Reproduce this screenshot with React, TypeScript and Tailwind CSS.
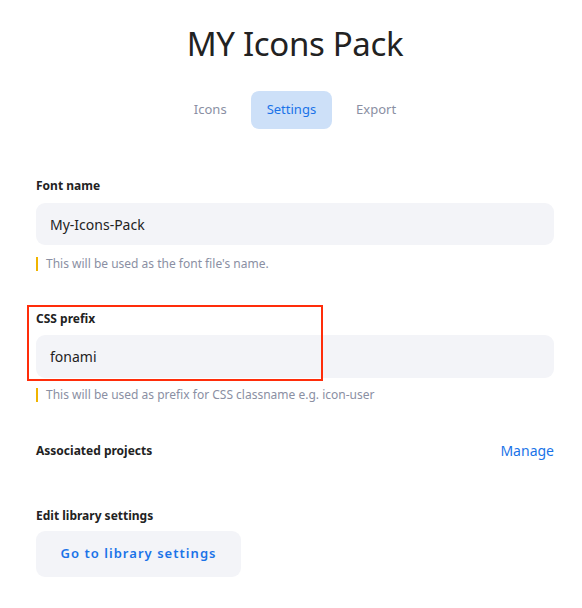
import React from "react";

function Hint({ children, tight }: { children: React.ReactNode; tight?: boolean }) {
  return (
    <div className={tight ? "mt-[9px] flex items-center gap-[8px]" : "mt-[11px] flex items-center gap-[8px]"}>
      <span className="h-[14px] w-[2px] bg-[#f0b400]" />
      <span className="text-[12px] leading-[16px] text-[#8a8fa3]">{children}</span>
    </div>
  );
}

export default function App() {
  return (
    <div
      className="relative min-h-[608px] w-[582px] bg-white pl-[36px] pr-[28px] text-[#222]"
      style={{ fontFamily: "'Noto Sans', sans-serif" }}
    >
      <h1 className="pt-[22px] text-center text-[33px] font-normal leading-[44px] tracking-[-0.01em] text-[#222]">
        MY Icons Pack
      </h1>
      <div className="mt-[25px] flex justify-center gap-[8px]">
        <button className="h-[38px] rounded-[8px] px-[16px] text-[13px] text-[#8a8fa3]">Icons</button>
        <button className="h-[38px] rounded-[8px] bg-[#cde0f8] px-[16px] text-[13px] text-[#1a73e8]">
          Settings
        </button>
        <button className="h-[38px] rounded-[8px] px-[16px] text-[13px] text-[#8a8fa3]">Export</button>
      </div>

      <div className="mt-[49px]">
        <div className="text-[12px] font-bold leading-[16px] text-[#222]">Font name</div>
        <div className="mt-[9px] flex h-[42px] items-center rounded-[9px] bg-[#f3f4f8] px-[14px] text-[14px] text-[#222]">
          My-Icons-Pack
        </div>
        <Hint>This will be used as the font file's name.</Hint>
      </div>

      <div className="relative mt-[39px]">
        <div className="text-[12px] font-bold leading-[16px] text-[#222]">CSS prefix</div>
        <div className="mt-[8px] flex h-[43px] items-center rounded-[9px] bg-[#f3f4f8] px-[14px] text-[14px] text-[#222]">
          fonami
        </div>
        <Hint tight>This will be used as prefix for CSS classname e.g. icon-user</Hint>
        <div className="pointer-events-none absolute left-[-9px] top-[-6px] h-[76px] w-[296px] border-2 border-[#ff2d0a]" />
      </div>

      <div className="mt-[37px] flex items-center justify-between">
        <div className="text-[12px] font-bold leading-[16px] text-[#222]">Associated projects</div>
        <div className="text-[14px] text-[#1a73e8]">Manage</div>
      </div>

      <div className="mt-[47px]">
        <div className="text-[12px] font-bold leading-[16px] text-[#222]">Edit library settings</div>
        <button className="mt-[7px] h-[46px] w-[205px] rounded-[9px] bg-[#f3f4f8] text-[13px] font-semibold tracking-[0.08em] text-[#1a73e8]">
          Go to library settings
        </button>
      </div>
    </div>
  );
}
